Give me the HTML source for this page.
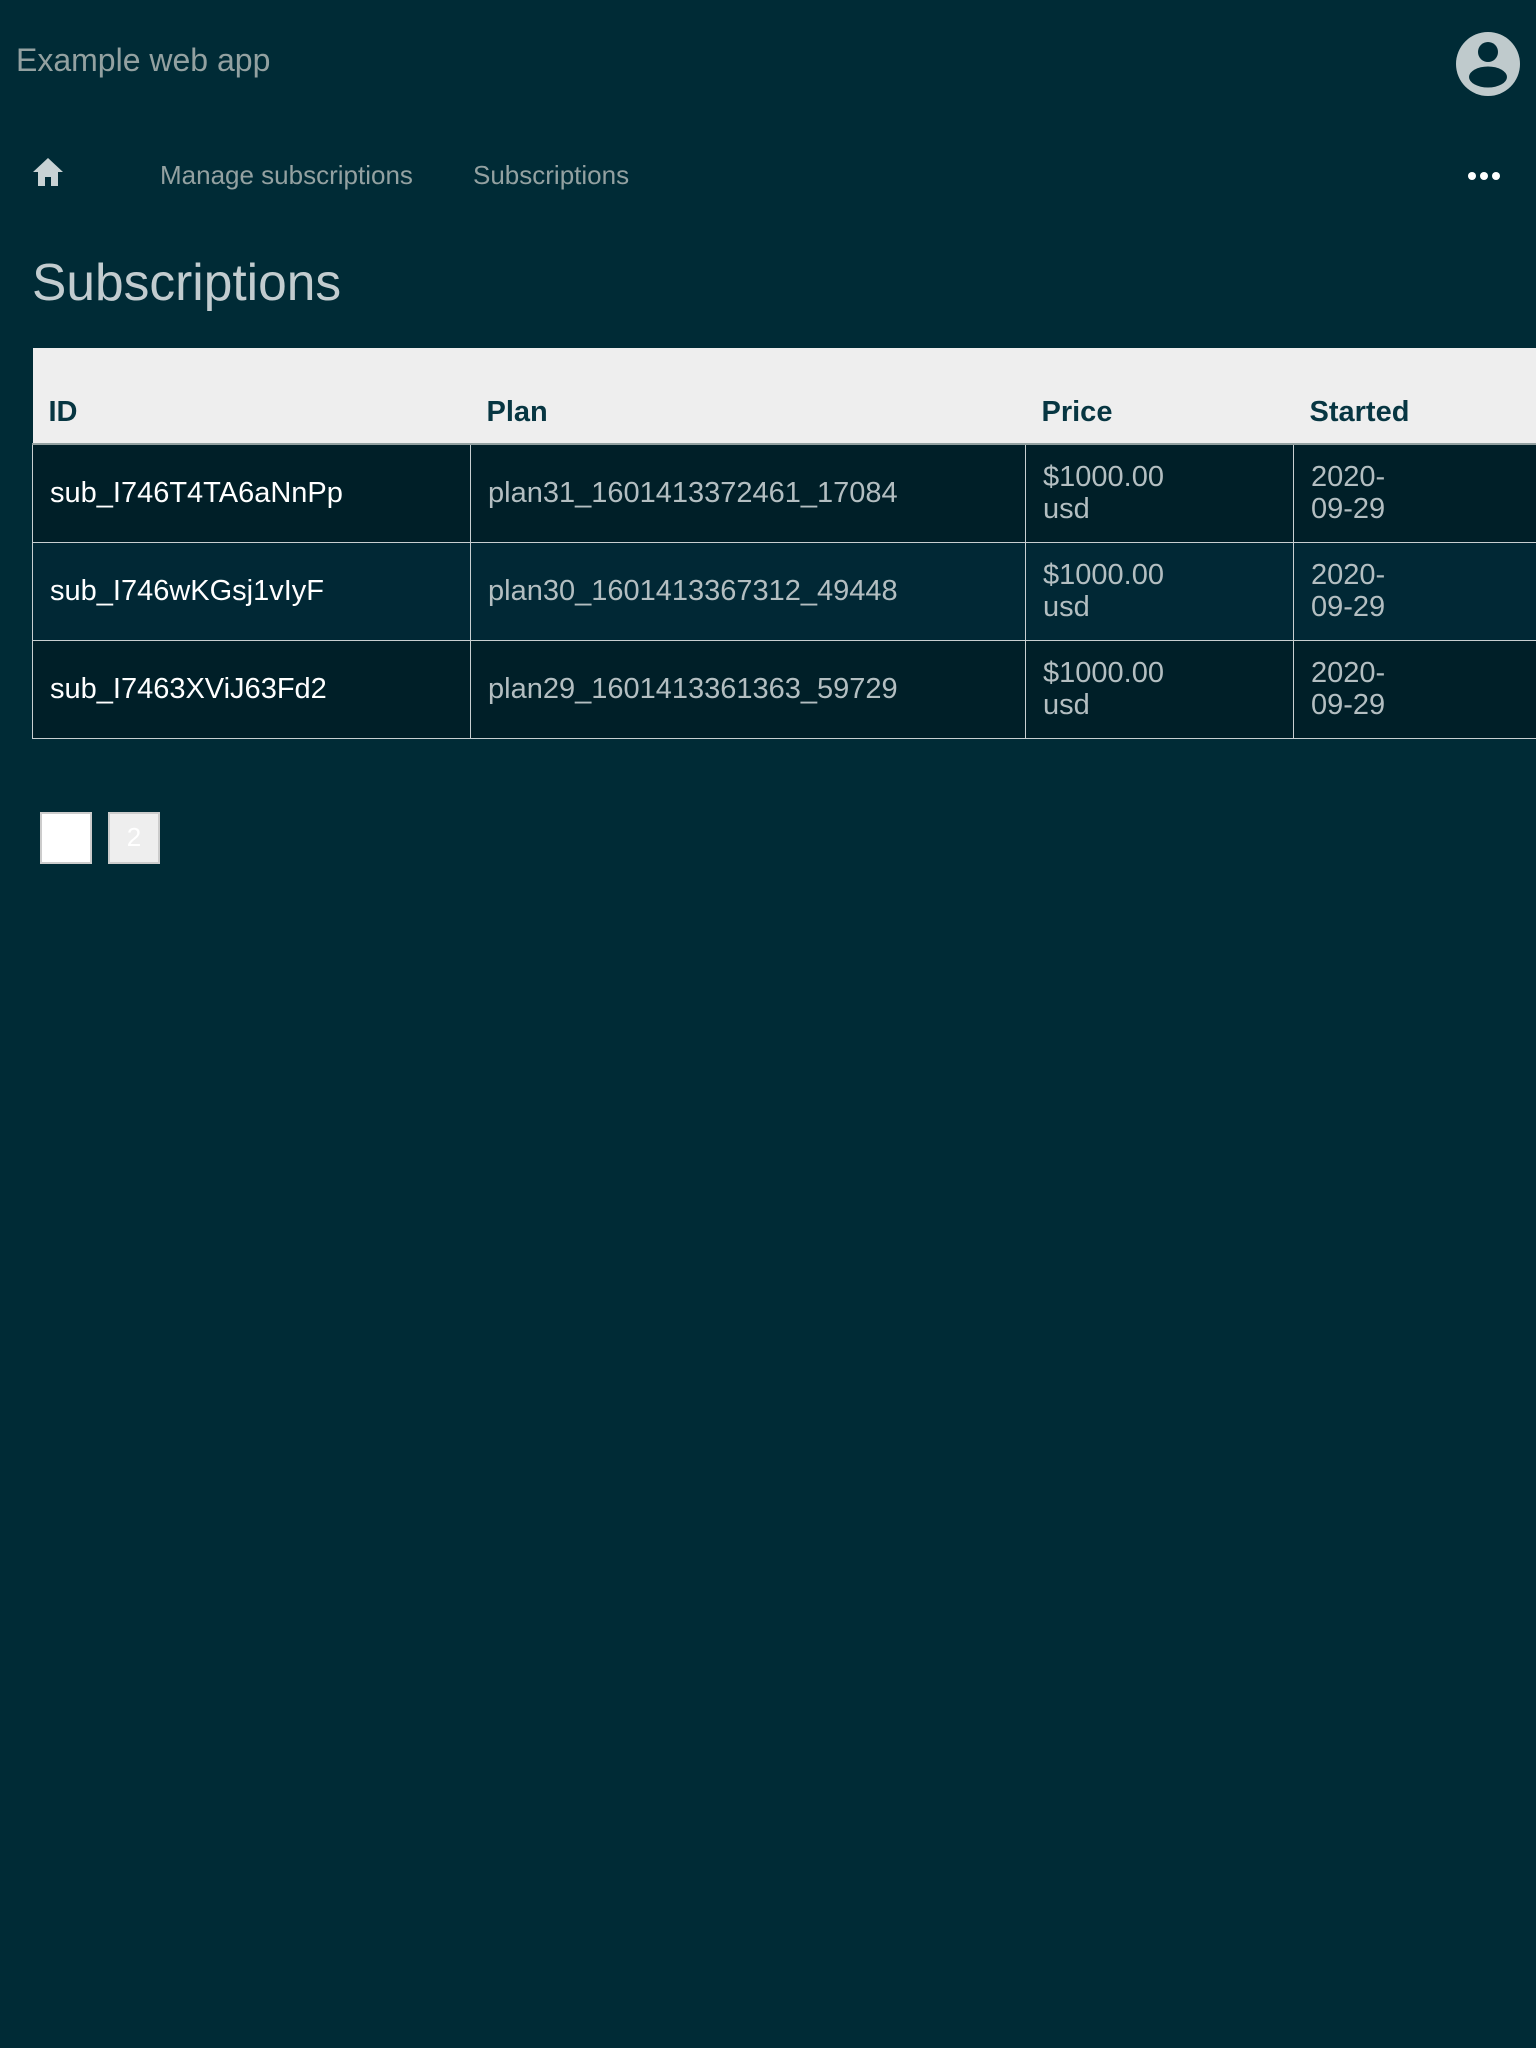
<!DOCTYPE html>
<html><head><meta charset="utf-8"><style>
*{margin:0;padding:0;box-sizing:border-box}
html,body{width:1536px;height:2048px;background:#002b36;overflow:hidden;font-family:"Liberation Sans",sans-serif}
.t{position:absolute;white-space:nowrap}
table{position:absolute;left:32px;top:348px;border-collapse:collapse;width:1560px;table-layout:fixed}
th{background:#eeeeee;color:#073642;font-weight:bold;font-size:29px;text-align:left;height:96px;vertical-align:bottom;padding:0 0 14px 16px;border-bottom:2px solid #93a1a1}
td{height:98px;font-size:29px;line-height:32px;color:#b3bec1;padding:0 0 0 17px;border:1.5px solid #c8cfd1;border-top:none}
td:first-child{color:#fff}
tr.a td{background:#001f28}
tr.b td{background:#012835}
.pg{position:absolute;top:812px;width:52px;height:52px;border:2px solid #cccccc;font-size:26px;text-align:center;line-height:46px;color:#fff}
</style></head><body>
<div class="t" style="left:16px;top:42px;font-size:32px;color:#93a1a1">Example web app</div>
<svg style="position:absolute;left:1456px;top:32px" width="64" height="64" viewBox="0 0 64 64">
<circle cx="32" cy="32" r="32" fill="#bfcacc"/>
<circle cx="32" cy="20" r="10" fill="#002b36"/>
<ellipse cx="32" cy="45" rx="19" ry="10.5" fill="#002b36"/>
</svg>
<svg style="position:absolute;left:32px;top:157px" width="32" height="30" viewBox="0 0 32 30">
<path d="M16 1 L1 15 H6 V29 H13 V20 H19 V29 H26 V15 H31 Z" fill="#c8d2d4"/>
</svg>
<div class="t" style="left:160px;top:160px;font-size:26px;color:#93a1a1">Manage subscriptions</div>
<div class="t" style="left:473px;top:160px;font-size:26px;color:#93a1a1">Subscriptions</div>
<svg style="position:absolute;left:1464px;top:170px" width="40" height="12"><circle cx="8" cy="6" r="4" fill="#fff"/><circle cx="20" cy="6" r="4" fill="#fff"/><circle cx="32" cy="6" r="4" fill="#fff"/></svg>
<div class="t" style="left:32px;top:252px;font-size:51.5px;color:#c2cccf">Subscriptions</div>
<table>
<colgroup><col style="width:438px"><col style="width:555px"><col style="width:268px"><col></colgroup>
<tr><th>ID</th><th>Plan</th><th>Price</th><th>Started</th></tr>
<tr class="a"><td>sub_I746T4TA6aNnPp</td><td>plan31_1601413372461_17084</td><td>$1000.00<br>usd</td><td>2020-<br>09-29</td></tr>
<tr class="b"><td>sub_I746wKGsj1vIyF</td><td>plan30_1601413367312_49448</td><td>$1000.00<br>usd</td><td>2020-<br>09-29</td></tr>
<tr class="a"><td>sub_I7463XViJ63Fd2</td><td>plan29_1601413361363_59729</td><td>$1000.00<br>usd</td><td>2020-<br>09-29</td></tr>
</table>
<div class="pg" style="left:40px;background:#fff"></div>
<div class="pg" style="left:108px;background:#eeeeee">2</div>
</body></html>
